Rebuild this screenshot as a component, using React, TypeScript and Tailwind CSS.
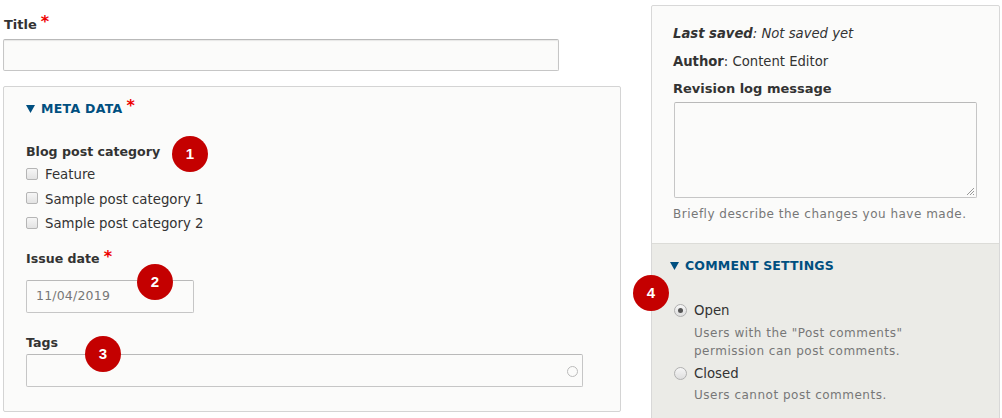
import React from "react";

const font = { fontFamily: '"DejaVu Sans", "Liberation Sans", sans-serif' };

function Badge({ n, x, y }: { n: number; x: number; y: number }) {
  return (
    <div
      className="absolute w-[36px] h-[36px] rounded-full bg-[#c40000] text-white text-[15px] font-bold flex items-center justify-center"
      style={{ left: x, top: y, fontFamily: '"Liberation Sans", Arial, sans-serif' }}
    >
      {n}
    </div>
  );
}

function Checkbox({ label }: { label: string }) {
  return (
    <div className="h-[24.5px] flex items-center">
      <span className="w-[12px] h-[12px] rounded-[2px] border border-[#b5b5b5] bg-gradient-to-b from-[#f6f6f6] to-[#e3e3e3] mr-[7px] -mt-[3px]" />
      <span className="text-[13.3px] text-[#333]">{label}</span>
    </div>
  );
}

function Star() {
  return <span className="text-[#e00] text-[16px] font-bold ml-[4px] relative -top-[3px]">*</span>;
}

function Triangle() {
  return (
    <svg width="9" height="8" viewBox="0 0 9 8" className="mr-[6px]">
      <path d="M0 0 H9 L4.5 8 Z" fill="#004f80" />
    </svg>
  );
}

function Radio({ checked, label }: { checked?: boolean; label: string }) {
  return (
    <div className="h-[18px] flex items-center">
      <span className="w-[13px] h-[13px] rounded-full border border-[#b0b0b0] bg-gradient-to-b from-[#f6f6f6] to-[#dedede] mr-[7px] -mt-[2px] flex items-center justify-center">
        {checked && <span className="w-[5px] h-[5px] rounded-full bg-[#555]" />}
      </span>
      <span className="text-[13.3px] text-[#333]">{label}</span>
    </div>
  );
}

export default function App() {
  return (
    <div className="relative w-[1002px] h-[418px] bg-white overflow-hidden flex" style={font}>
      {/* Left column */}
      <div className="w-[618px] ml-[3px] flex flex-col">
        <div className="h-[18px] mt-[16px] flex items-center pl-[1px]">
          <span className="text-[13px] font-bold text-[#333]">Title</span>
          <Star />
        </div>
        <div className="mt-[5px] w-[556px] h-[32px] border border-[#c6c6c6] border-t-[#b9b9b9] rounded-[2px] bg-[#fbfbfa] shadow-[inset_0_1px_1px_rgba(0,0,0,0.08)]" />
        <div className="mt-[15px] h-[326px] border border-[#d4d4d4] rounded-[2px] bg-[#fbfbfa] pl-[22px] flex flex-col">
          <div className="mt-[13px] h-[18px] flex items-center">
            <Triangle />
            <span className="text-[12.5px] font-bold text-[#004f80] tracking-[0.3px]">META DATA</span>
            <Star />
          </div>
          <div className="mt-[25px] h-[18px] flex items-center">
            <span className="text-[12.6px] font-bold text-[#333]">Blog post category</span>
          </div>
          <div className="mt-[2px] flex flex-col">
            <Checkbox label="Feature" />
            <Checkbox label="Sample post category 1" />
            <Checkbox label="Sample post category 2" />
          </div>
          <div className="mt-[14px] h-[18px] flex items-center">
            <span className="text-[12.6px] font-bold text-[#333]">Issue date</span>
            <Star />
          </div>
          <div className="mt-[11px] w-[168px] h-[33px] border border-[#c6c6c6] border-t-[#b9b9b9] rounded-[2px] bg-[#fbfbfa] flex items-center pl-[9px]">
            <span className="text-[12.5px] text-[#777] tracking-[0.2px]">11/04/2019</span>
          </div>
          <div className="mt-[22px] h-[18px] flex items-center">
            <span className="text-[12.6px] font-bold text-[#333]">Tags</span>
          </div>
          <div className="mt-[1px] w-[557px] h-[33px] border border-[#c6c6c6] border-t-[#b9b9b9] rounded-[2px] bg-[#fbfbfa] flex items-center justify-end pr-[4px]">
            <span className="w-[11px] h-[11px] rounded-full border-[1.5px] border-[#bbb] mt-[2px]" />
          </div>
        </div>
      </div>

      {/* Sidebar */}
      <div className="ml-[30px] mt-[5px] w-[349px] h-[420px] border border-[#d8d8d8] rounded-[2px] flex flex-col bg-[#fbfbfa]">
        <div className="pl-[21px] pt-[19px] pb-[21px] flex flex-col">
          <div className="h-[18px] flex items-center text-[13.2px] italic text-[#333]">
            <span className="font-bold">Last saved</span>
            <span>: Not saved yet</span>
          </div>
          <div className="mt-[10px] h-[18px] flex items-center text-[13.2px] text-[#333]">
            <span className="font-bold">Author</span>
            <span>: Content Editor</span>
          </div>
          <div className="mt-[9px] h-[18px] flex items-center">
            <span className="text-[13px] font-bold text-[#333]">Revision log message</span>
          </div>
          <div className="relative mt-[4px] ml-[1px] w-[303px] h-[96px] border border-[#c6c6c6] border-t-[#b9b9b9] rounded-[2px] bg-[#fbfbfa]">
            <svg width="10" height="10" viewBox="0 0 10 10" className="absolute right-[1px] bottom-[1px]">
              <path d="M9 2 L2 9 M9 5 L5 9 M9 8 L8 9" stroke="#999" strokeWidth="1" />
            </svg>
          </div>
          <div className="mt-[8px] h-[16px] flex items-center">
            <span className="text-[12px] text-[#777] tracking-[0.5px]">Briefly describe the changes you have made.</span>
          </div>
        </div>
        <div className="flex-1 bg-[#ebebe7] border-t border-[#dcdcd8] pl-[18px] flex flex-col">
          <div className="mt-[13px] h-[18px] flex items-center">
            <Triangle />
            <span className="text-[12.5px] font-bold text-[#004f80] tracking-[0.2px]">COMMENT SETTINGS</span>
          </div>
          <div className="ml-[4px] flex flex-col">
            <div className="mt-[27px]">
              <Radio checked label="Open" />
            </div>
            <div className="ml-[20px] mt-[4px] flex flex-col text-[12px] text-[#777] tracking-[0.5px] leading-[18px]">
              <span>Users with the "Post comments"</span>
              <span>permission can post comments.</span>
            </div>
            <div className="mt-[5px]">
              <Radio label="Closed" />
            </div>
            <div className="ml-[20px] mt-[3px] text-[12px] text-[#777] tracking-[0.5px] leading-[18px]">
              Users cannot post comments.
            </div>
          </div>
        </div>
      </div>

      <Badge n={1} x={172} y={136} />
      <Badge n={2} x={137} y={264} />
      <Badge n={3} x={85} y={336} />
      <Badge n={4} x={633} y={275} />
    </div>
  );
}
